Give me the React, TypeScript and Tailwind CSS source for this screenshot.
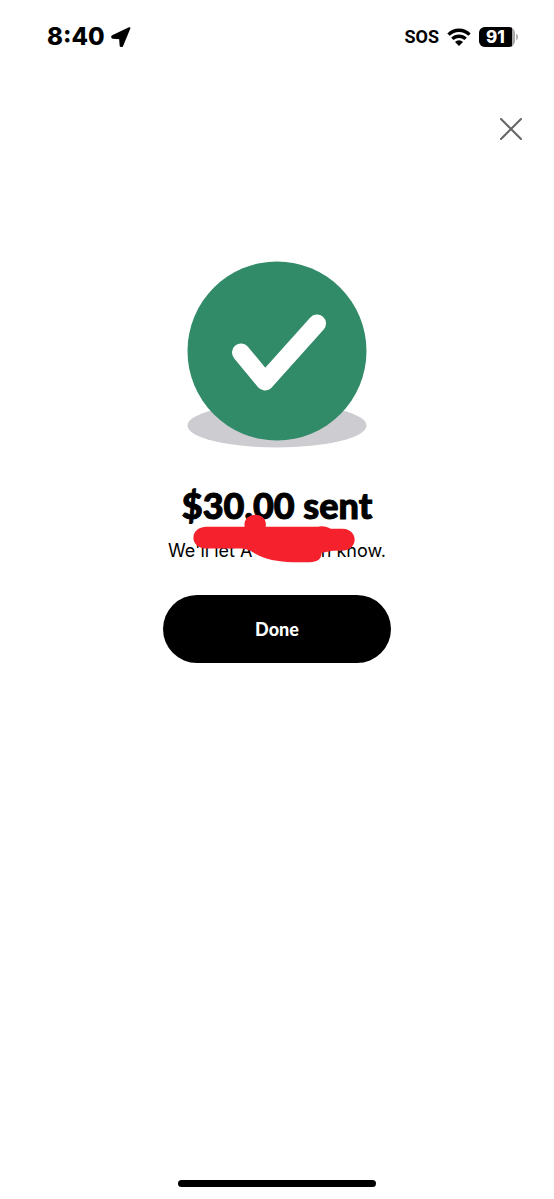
function LocationArrow() {
  return (
    <svg viewBox="0 0 20 20" className="h-5 w-5" fill="#000" stroke="#000" strokeWidth="2" strokeLinejoin="round" aria-hidden="true">
      <path d="M18.4 1.2 1.6 9.2c-.7.4-.5 1.5.3 1.6l7.2.5.5 7.1c.1.8 1.2 1 1.6.3Z" />
    </svg>
  );
}

function WifiIcon() {
  return (
    <svg viewBox="0 0 24 18" className="h-[18px] w-6" fill="none" stroke="#000" strokeWidth="3.4" aria-hidden="true">
      <path d="M1.5 6.6a15 15 0 0 1 21 0" />
      <path d="M5.4 10.9a9.4 9.4 0 0 1 13.2 0" />
      <path d="M12 18 8 13.9a5.7 5.7 0 0 1 8 0Z" fill="#000" stroke="none" />
    </svg>
  );
}

function Battery({ level }: { level: number }) {
  return (
    <div className="flex items-center gap-px">
      <div className="flex h-5 w-9 overflow-hidden rounded-md bg-[#a8a8a8]">
        <div className="flex items-center justify-center bg-black" style={{ width: `${level}%` }}>
          <span className="text-[17px] leading-5 font-extrabold text-white">{level}</span>
        </div>
      </div>
      <div className="h-1.5 w-0.5 rounded-r-full bg-[#b4b4b4]" />
    </div>
  );
}

function StatusBar() {
  return (
    <header className="flex h-[74px] items-center justify-between pr-9 pl-[47px]">
      <div className="flex items-center gap-1.5">
        <time className="text-2xl font-extrabold">8:40</time>
        <LocationArrow />
      </div>
      <div className="flex items-center gap-2">
        <span className="font-['Roboto','Liberation_Sans',sans-serif] text-lg leading-6 font-bold">SOS</span>
        <WifiIcon />
        <Battery level={91} />
      </div>
    </header>
  );
}

function SuccessIllustration() {
  return (
    <svg viewBox="0 0 180 188" className="h-[188px] w-[180px]" role="img" aria-label="Success">
      <ellipse cx="90" cy="164.5" rx="89.5" ry="22" fill="#cdcdd1" />
      <circle cx="90" cy="90" r="89.5" fill="#318b68" />
      <path d="M54 91.5 78 120.5 130 62.5" fill="none" stroke="#fff" strokeWidth="18" strokeLinecap="round" strokeLinejoin="round" />
    </svg>
  );
}

// Hand-drawn marker stroke that hides the recipient's name
function Scribble() {
  return (
    <svg viewBox="0 0 486 146" className="absolute -top-[25px] left-[25px] h-[49px] w-[162px]" fill="#f5222d" aria-hidden="true">
      <path d="M38 38H155C151 18 166 2 187 2S222 17 218 38H373C387 34 401 36 413 44H448C498 46 495 105 453 109L420 110 386 116C385 136 372 144 350 144H300C255 143 215 136 186 118 169 107 158 104 145 103H35C-10 99-11 41 38 38Z" />
    </svg>
  );
}

export default function App() {
  return (
    <div className="flex min-h-screen flex-col bg-white font-['Inter','Liberation_Sans',sans-serif] text-black">
      <StatusBar />

      <div className="flex justify-end px-8 pt-11">
        <button type="button" aria-label="Close" className="h-[22px] w-[22px]">
          <svg viewBox="0 0 22 22" fill="none" stroke="#666" strokeWidth="2" strokeLinecap="round">
            <path d="M1 1 21 21M21 1 1 21" />
          </svg>
        </button>
      </div>

      <main className="flex flex-1 flex-col items-center pt-[121px]">
        <SuccessIllustration />
        <h1 className="mt-9 font-['Lato','Liberation_Sans',sans-serif] text-4xl leading-10 font-black [-webkit-text-stroke:1px_black]">
          $30.00 sent
        </h1>
        <div className="relative mt-3.5 flex w-[218px] justify-between text-lg leading-6">
          <span>We'll let A</span>
          <span>n know.</span>
          <Scribble />
        </div>
        <button
          type="button"
          className="mt-8 h-[68px] w-[228px] rounded-full bg-black font-['Lato','Liberation_Sans',sans-serif] text-lg font-black text-white"
        >
          Done
        </button>
      </main>

      <div className="mx-auto mb-3 h-[7px] w-[198px] rounded-full bg-black" />
    </div>
  );
}
